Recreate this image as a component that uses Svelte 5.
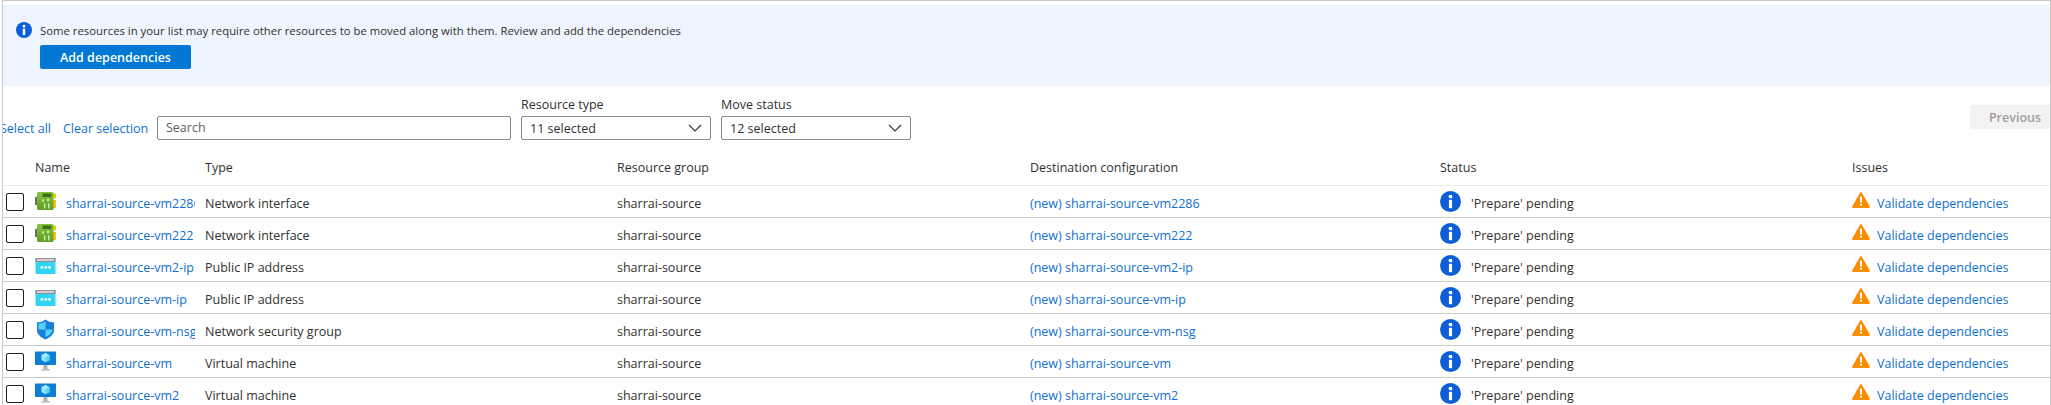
<script>
  const rows = [
    { name: "sharrai-source-vm2286", type: "Network interface", kind: "nic" },
    { name: "sharrai-source-vm222", type: "Network interface", kind: "nic" },
    { name: "sharrai-source-vm2-ip", type: "Public IP address", kind: "ip" },
    { name: "sharrai-source-vm-ip", type: "Public IP address", kind: "ip" },
    { name: "sharrai-source-vm-nsg", type: "Network security group", kind: "nsg" },
    { name: "sharrai-source-vm", type: "Virtual machine", kind: "vm" },
    { name: "sharrai-source-vm2", type: "Virtual machine", kind: "vm" },
  ];
</script>

{#snippet infoIcon(size)}
  <svg width={size} height={size} viewBox="0 0 21 21" class="no-shrink">
    <circle cx="10.5" cy="10.5" r="10.5" fill="#0b5ed7" />
    <circle cx="10.5" cy="5.6" r="1.9" fill="#fff" />
    <rect x="8.9" y="8.8" width="3.2" height="8.4" fill="#fff" />
  </svg>
{/snippet}

{#snippet chevron()}
  <svg width="14" height="8" viewBox="0 0 14 8" class="no-shrink">
    <path d="M1 1l6 6 6-6" fill="none" stroke="#323130" stroke-width="1.1" />
  </svg>
{/snippet}

{#snippet resourceIcon(kind)}
  {#if kind === "nic"}
    <svg width="21" height="21" viewBox="0 0 21 21" class="no-shrink">
      <defs>
        <linearGradient id="nic-body" x1="0" y1="0" x2="0" y2="1">
          <stop offset="0" stop-color="#86c33a" />
          <stop offset="1" stop-color="#5f9f28" />
        </linearGradient>
      </defs>
      <rect x="0" y="6" width="2" height="8" fill="#6b6f6b" />
      <rect x="18" y="2.500" width="3" height="5" fill="#f2c811" />
      <rect x="18" y="9" width="3" height="8" fill="#f2c811" />
      <rect x="2" y="1" width="16.500" height="18" rx="1.500" fill="url(#nic-body)" />
      <rect x="7.500" y="2.500" width="9" height="3.500" fill="#3f6f20" />
      <rect x="12" y="8" width="2" height="2" fill="#d9ecc0" />
      <rect x="7" y="8.500" width="2" height="2" fill="#d9ecc0" />
      <rect x="9" y="12.500" width="1.400" height="5" fill="#d9ecc0" />
      <rect x="13" y="12.500" width="1.400" height="5" fill="#d9ecc0" />
    </svg>
  {:else if kind === "ip"}
    <svg width="21" height="21" viewBox="0 0 21 21" class="no-shrink">
      <rect x="0.500" y="3" width="20" height="16" rx="1" fill="#32d4f5" />
      <rect x="0.500" y="3" width="20" height="4" fill="#8d9095" />
      <rect x="2" y="4.200" width="17" height="1.500" fill="#e6e6e6" />
      <circle cx="6.800" cy="12.400" r="1.400" fill="#fff" />
      <circle cx="10.700" cy="12.400" r="1.400" fill="#fff" />
      <circle cx="14.600" cy="12.400" r="1.400" fill="#fff" />
    </svg>
  {:else if kind === "nsg"}
    <svg width="21" height="21" viewBox="0 0 21 21" class="no-shrink">
      <path d="M10.500 0.500c2.500 2 5.500 2.800 8.500 2.800v8c0 4.400-4.200 7.400-8.500 9.200C6.200 18.700 2 15.700 2 11.300v-8c3 0 6-.8 8.500-2.800z" fill="#1b7fd6" />
      <path d="M10.500 2.500v8H3.500v-6c2.500-.1 5-.8 7-2z" fill="#50d4ff" />
      <path d="M10.500 10.500h7c-.3 3.500-3.600 6-7 7.600z" fill="#50d4ff" />
    </svg>
  {:else}
    <svg width="21" height="21" viewBox="0 0 21 21" class="no-shrink">
      <rect x="0" y="0.500" width="21" height="13.500" rx="0.800" fill="#0f7ed8" />
      <path d="M10.500 1.800l4 2.300v4.800l-4 2.400-4-2.400V4.100z" fill="#9beaf9" />
      <path d="M10.500 6.400l4-2.300v4.800l-4 2.400z" fill="#50d4f2" />
      <path d="M8.800 14h3.400l.4 4H8.400z" fill="#a9adb2" />
      <rect x="6" y="18" width="9" height="1.800" rx="0.600" fill="#c4c6c9" />
    </svg>
  {/if}
{/snippet}

<div class="page">
  <section class="banner">
    <div class="message">
      {@render infoIcon(16)}
      <span>Some resources in your list may require other resources to be moved along with them. Review and add the dependencies</span>
    </div>
    <button class="primary">Add dependencies</button>
  </section>

  <section class="toolbar">
    <a class="link select-all" href="#all">Select all</a>
    <a class="link clear" href="#clear">Clear selection</a>
    <div class="search">Search</div>
    <div class="field">
      <span class="label">Resource type</span>
      <div class="select"><span>11 selected</span>{@render chevron()}</div>
    </div>
    <div class="field">
      <span class="label">Move status</span>
      <div class="select"><span>12 selected</span>{@render chevron()}</div>
    </div>
    <button class="previous">Previous</button>
  </section>

  <div class="grid head">
    <span></span>
    <span>Name</span>
    <span>Type</span>
    <span>Resource group</span>
    <span>Destination configuration</span>
    <span>Status</span>
    <span>Issues</span>
  </div>

  {#each rows as row}
    <div class="grid row">
      <span class="check"></span>
      <div class="name">
        {@render resourceIcon(row.kind)}
        <a class="link clip" href="#name">{row.name}</a>
      </div>
      <span class="cell">{row.type}</span>
      <span class="cell">sharrai-source</span>
      <a class="link cell" href="#dest">(new) {row.name}</a>
      <div class="status">
        {@render infoIcon(21)}
        <span class="cell">'Prepare' pending</span>
      </div>
      <div class="issue">
        <svg width="18" height="16" viewBox="0 0 18 16" class="no-shrink warn">
          <path d="M9 0.300c.4 0 .7.200.9.500l7.900 13.700c.4.700-.1 1.500-.9 1.500H1.100c-.8 0-1.300-.8-.9-1.500L8.100.8c.2-.3.500-.5.900-.5z" fill="#ff8c00" />
          <rect x="8" y="4.600" width="2" height="6" fill="#fff" />
          <rect x="8" y="11.800" width="2" height="2" fill="#fff" />
        </svg>
        <a class="link cell" href="#validate">Validate dependencies</a>
      </div>
    </div>
  {/each}
</div>

<style>
  :global(body) {
    margin: 0;
    background: #fff;
    overflow: hidden;
  }

  .page {
    height: 404px;
    margin-left: 2px;
    padding-top: 4px;
    box-sizing: content-box;
    border-top: 1px solid #c8c8c8;
    border-left: 1px solid #c8c8c8;
    border-right: 1px solid #c8c8c8;
    overflow: hidden;
    font-family: "Open Sans", "Noto Sans", sans-serif;
    font-size: 12.500px;
    color: #323130;
  }

  .no-shrink {
    flex-shrink: 0;
  }

  .banner {
    height: 81px;
    box-sizing: border-box;
    padding: 17px 0 0 13px;
    background: #eef5fe;
  }

  .message {
    display: flex;
    align-items: center;
    gap: 8px;
    height: 16px;
    font-size: 11.350px;
  }

  .primary {
    display: block;
    width: 151px;
    height: 24px;
    margin: 7px 0 0 24px;
    padding: 0;
    border: 0;
    border-radius: 2px;
    background: #0078d4;
    color: #fff;
    font: 600 12.500px "Open Sans", sans-serif;
  }

  .link {
    color: #0f6fcf;
    text-decoration: none;
  }

  .toolbar {
    display: flex;
    align-items: flex-end;
    height: 54px;
    margin-left: -3px;
  }

  .select-all {
    width: 63px;
    height: 24px;
    line-height: 25px;
    flex-shrink: 0;
  }

  .clear {
    width: 94px;
    height: 24px;
    line-height: 25px;
    flex-shrink: 0;
  }

  .search,
  .select {
    box-sizing: border-box;
    height: 24px;
    padding: 0 8px;
    border: 1px solid #8a8886;
    border-radius: 2px;
    line-height: 22px;
  }

  .search {
    width: 354px;
    margin-right: 10px;
    color: #605e5c;
  }

  .field {
    display: flex;
    flex-direction: column;
    width: 190px;
    margin-right: 10px;
  }

  .label {
    margin-bottom: 3px;
    line-height: 16px;
    font-weight: 500;
  }

  .select {
    display: flex;
    align-items: center;
    justify-content: space-between;
  }

  .select span {
    padding-top: 1px;
  }

  .previous {
    width: 80px;
    height: 24px;
    margin: 0 0 11px auto;
    padding: 0 0 0 10px;
    border: 0;
    border-radius: 2px 0 0 2px;
    background: #f3f2f1;
    color: #a19f9d;
    font: 600 12.500px "Open Sans", sans-serif;
  }

  .grid {
    display: grid;
    grid-template-columns: 35px 170px 412px 413px 410px 412px 199px;
    align-items: center;
    margin-left: -3px;
  }

  .head {
    box-sizing: border-box;
    height: 46px;
    padding-top: 10px;
    border-bottom: 1px solid #ebebeb;
    font-weight: 500;
  }

  .row {
    box-sizing: border-box;
    height: 32px;
    border-bottom: 1px solid #c8c8c8;
  }

  .cell,
  .clip {
    padding-top: 3px;
  }

  .check {
    box-sizing: border-box;
    width: 18px;
    height: 18px;
    margin-left: 6px;
    border: 1px solid #201f1e;
    border-radius: 2px;
  }

  .name {
    display: flex;
    align-items: center;
    gap: 10px;
    padding-right: 10px;
    min-width: 0;
  }

  .clip {
    overflow: hidden;
    white-space: nowrap;
  }

  .status {
    display: flex;
    align-items: center;
    gap: 10px;
  }

  .issue {
    display: flex;
    align-items: center;
    gap: 7px;
  }

  .warn {
    margin-bottom: 3px;
  }
</style>
